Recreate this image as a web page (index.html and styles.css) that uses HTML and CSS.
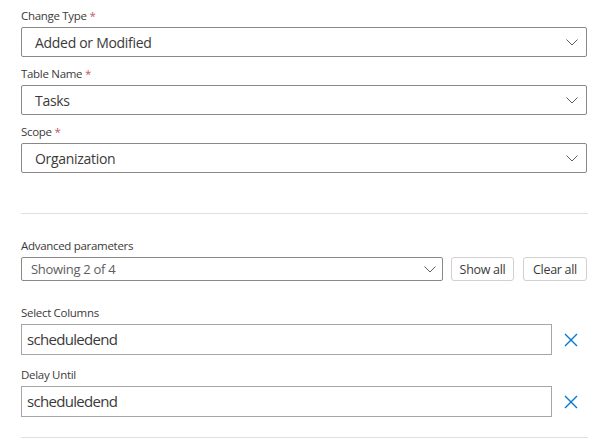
FILE: index.html
```html
<!DOCTYPE html>
<html>
<head>
<meta charset="utf-8">
<link rel="stylesheet" href="styles.css">
</head>
<body>
<div class="form">
  <div class="field">
    <div class="label">Change Type <span class="req">*</span></div>
    <div class="dropdown">
      <span class="value">Added or Modified</span>
      <svg class="chev" width="12" height="7" viewBox="0 0 12 7"><path d="M0.5 0.5 L6 6 L11.5 0.5" fill="none" stroke="#605e5c" stroke-width="1"/></svg>
    </div>
  </div>
  <div class="field">
    <div class="label">Table Name <span class="req">*</span></div>
    <div class="dropdown">
      <span class="value">Tasks</span>
      <svg class="chev" width="12" height="7" viewBox="0 0 12 7"><path d="M0.5 0.5 L6 6 L11.5 0.5" fill="none" stroke="#605e5c" stroke-width="1"/></svg>
    </div>
  </div>
  <div class="field">
    <div class="label">Scope <span class="req">*</span></div>
    <div class="dropdown">
      <span class="value">Organization</span>
      <svg class="chev" width="12" height="7" viewBox="0 0 12 7"><path d="M0.5 0.5 L6 6 L11.5 0.5" fill="none" stroke="#605e5c" stroke-width="1"/></svg>
    </div>
  </div>
  <div class="divider first"></div>
  <div class="adv">
    <div class="label">Advanced parameters</div>
    <div class="adv-row">
      <div class="dropdown small">
        <span class="value">Showing 2 of 4</span>
        <svg class="chev" width="12" height="7" viewBox="0 0 12 7"><path d="M0.5 0.5 L6 6 L11.5 0.5" fill="none" stroke="#605e5c" stroke-width="1"/></svg>
      </div>
      <button class="btn show">Show all</button>
      <button class="btn clear">Clear all</button>
    </div>
  </div>
  <div class="param">
    <div class="label">Select Columns</div>
    <div class="param-row">
      <div class="input">scheduledend</div>
      <span class="remove"><svg width="14" height="14" viewBox="0 0 14 14"><path d="M1 1 L13 13 M13 1 L1 13" stroke="#0078d4" stroke-width="1.4" fill="none"/></svg></span>
    </div>
  </div>
  <div class="param second">
    <div class="label">Delay Until</div>
    <div class="param-row">
      <div class="input">scheduledend</div>
      <span class="remove"><svg width="14" height="14" viewBox="0 0 14 14"><path d="M1 1 L13 13 M13 1 L1 13" stroke="#0078d4" stroke-width="1.4" fill="none"/></svg></span>
    </div>
  </div>
  <div class="divider last"></div>
</div>
</body>
</html>
```
FILE: styles.css
```css
html, body {
  margin: 0;
  padding: 0;
  background: #ffffff;
}
body {
  font-family: "Open Sans", "Noto Sans", sans-serif;
  color: #3b3a39;
}
.form {
  width: 566px;
  padding: 8px 0 0 21px;
  display: flex;
  flex-direction: column;
}
.field + .field {
  margin-top: 9px;
}
.label {
  font-size: 11.5px;
  line-height: 16px;
  height: 19px;
  letter-spacing: -0.3px;
  color: #3b3a39;
}
.req {
  color: #c4585e;
}
.dropdown {
  box-sizing: border-box;
  height: 30px;
  border: 1px solid #8a8886;
  border-radius: 2px;
  display: flex;
  align-items: center;
  justify-content: space-between;
  padding: 0 8px 0 13px;
}
.dropdown .value {
  font-size: 14px;
  letter-spacing: -0.3px;
  color: #3b3a39;
}
.dropdown.small {
  height: 24px;
  flex: 1;
  padding: 0 6px 0 9px;
}
.dropdown.small .value {
  font-size: 13px;
  color: #605e5c;
}
.divider {
  height: 1px;
  background: #e1dfdd;
  width: 567px;
}
.divider.first {
  margin-top: 40px;
}
.adv {
  margin-top: 24px;
}
.adv-row {
  display: flex;
  align-items: center;
}
.btn {
  box-sizing: border-box;
  height: 24px;
  border: 1px solid #d2d0ce;
  border-radius: 3px;
  background: #ffffff;
  font-family: inherit;
  font-size: 12.5px;
  letter-spacing: -0.3px;
  color: #3b3a39;
  padding: 0;
  margin-left: 8px;
}
.btn.show {
  width: 63px;
}
.btn.clear {
  width: 64px;
  margin-left: 9px;
}
.param {
  margin-top: 24px;
}
.param.second {
  margin-top: 12px;
}
.param-row {
  display: flex;
  align-items: center;
}
.input {
  box-sizing: border-box;
  width: 531px;
  height: 31px;
  border: 1px solid #a6a6a6;
  font-size: 15px;
  letter-spacing: -0.7px;
  line-height: 29px;
  padding-left: 5px;
  color: #3b3a39;
}
.remove {
  width: 35px;
  display: flex;
  justify-content: center;
  padding-left: 3px;
  box-sizing: border-box;
}
.divider.last {
  margin-top: 20px;
}
```
